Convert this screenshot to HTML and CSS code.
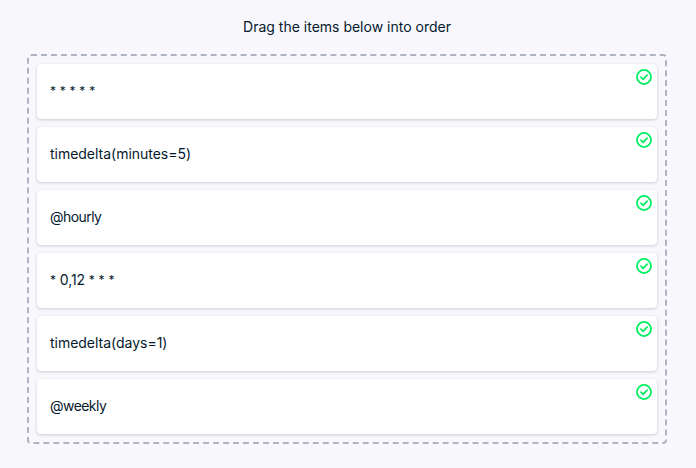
FILE: index.html
```html
<!DOCTYPE html>
<html lang="en">
<head>
<meta charset="utf-8">
<title>Order the items</title>
<link rel="stylesheet" href="styles.css">
</head>
<body>
<svg class="defs" aria-hidden="true">
  <symbol id="check" viewBox="0 0 16 16">
    <circle cx="8" cy="8" r="7.05" fill="none" stroke="currentColor" stroke-width="1.8"/>
    <path d="M5 8.2 7.1 10.3 11.1 6.2" fill="none" stroke="currentColor" stroke-width="1.8" stroke-linecap="round" stroke-linejoin="round"/>
  </symbol>
</svg>
<main class="exercise">
  <p class="title"><span>Drag the items below into order</span></p>
  <ol class="dropzone">
    <li class="card"><span class="stars">* * * * *</span><svg class="check"><use href="#check"/></svg></li>
    <li class="card"><span class="call">timedelta(minutes=5)</span><svg class="check"><use href="#check"/></svg></li>
    <li class="card"><span class="preset">@hourly</span><svg class="check"><use href="#check"/></svg></li>
    <li class="card"><span class="cron"><span class="stars">*</span> 0,12 <span class="stars">* * *</span></span><svg class="check"><use href="#check"/></svg></li>
    <li class="card"><span class="call">timedelta(days=1)</span><svg class="check"><use href="#check"/></svg></li>
    <li class="card"><span class="preset">@weekly</span><svg class="check"><use href="#check"/></svg></li>
  </ol>
</main>
</body>
</html>
```
FILE: styles.css
```css
* { box-sizing: border-box; }
body {
  margin: 0;
  background: #f7f7fc;
  color: #05192d;
  font: 14px/21px Inter, "Liberation Sans", sans-serif;
}
.defs { display: none; }
.exercise { padding: 16px 29px 24px 27px; }
.title { margin: 0 0 17px; text-align: center; }
.dropzone {
  display: flex;
  flex-direction: column;
  gap: 8px;
  margin: 0;
  padding: 8px;
  list-style: none;
  border: 2px dashed #afb5c0;
  border-radius: 4px;
}
.card {
  position: relative;
  display: flex;
  align-items: center;
  height: 55px;
  padding: 0 13px 2px;
  background: #fff;
  border-radius: 4px;
  box-shadow: 0 0 1px rgba(5, 25, 45, .08), 0 1px 3px rgba(5, 25, 45, .18);
}
.stars { font-size: 12px; letter-spacing: 0; word-spacing: .4px; }
.call { letter-spacing: -.02px; }
.preset { letter-spacing: -.55px; }
.cron { letter-spacing: -.1px; }
.cron .stars { line-height: 1; vertical-align: 1px; }
.check {
  position: absolute;
  top: 5px;
  right: 5px;
  width: 16px;
  height: 16px;
  color: #03ef62;
}
```
